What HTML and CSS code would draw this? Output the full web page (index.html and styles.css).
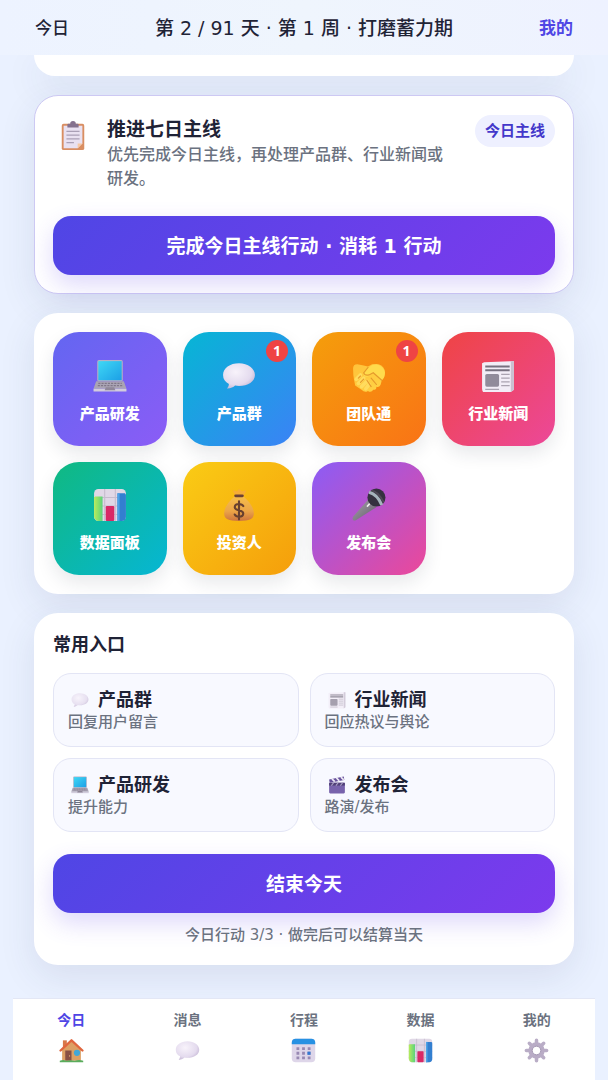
FILE: index.html
```html
<!DOCTYPE html>
<html lang="zh-CN">
<head>
<meta charset="utf-8">
<meta name="viewport" content="width=device-width, initial-scale=1">
<title>今日</title>
<link rel="stylesheet" href="styles.css">
</head>
<body>
<svg class="sprite" aria-hidden="true" width="0" height="0">
  <defs>
    <linearGradient id="screen" x1="0" y1="0" x2="1" y2="1"><stop offset="0" stop-color="#3fd8f5"/><stop offset="1" stop-color="#1c9fe6"/></linearGradient>
    <radialGradient id="bubble" cx=".4" cy=".35" r=".7"><stop offset="0" stop-color="#f8f3fb"/><stop offset=".7" stop-color="#e4dbee"/><stop offset="1" stop-color="#c3b5d3"/></radialGradient>
    <linearGradient id="bag" x1="0" y1="0" x2="0" y2="1"><stop offset="0" stop-color="#f5bd4c"/><stop offset=".6" stop-color="#eca546"/><stop offset="1" stop-color="#cd7440"/></linearGradient>
    <linearGradient id="handle" x1="0" y1="0" x2="1" y2="1"><stop offset="0" stop-color="#aaa4ae"/><stop offset="1" stop-color="#625c69"/></linearGradient>
    <linearGradient id="hand" x1="0" y1="0" x2="1" y2="1"><stop offset="0" stop-color="#ffc23a"/><stop offset="1" stop-color="#ffd445"/></linearGradient>
    <linearGradient id="green" x1="0" y1="0" x2="1" y2="0"><stop offset="0" stop-color="#b8ec5c"/><stop offset="1" stop-color="#5bd37c"/></linearGradient>
  </defs>
  <symbol id="clipboard" viewBox="0 0 32 32">
    <rect x="4" y="3" width="24" height="28" rx="2" fill="#d98e62"/>
    <path d="M6 5h20v19l-5 5H6z" fill="#e9e1f1"/>
    <path d="M26 24l-5 5v-5z" fill="#f7c9a4"/>
    <path d="M10 7v-3q0-1 1-1h2q0-3 3-3t3 3h2q1 0 1 1v3z" fill="#85718e"/>
    <path d="M9 11h14M9 15h14M9 19h14M9 23h8" stroke="#aaa0b6" stroke-width="1.4"/>
  </symbol>
  <symbol id="laptop" viewBox="0 0 32 32">
    <rect x="4" y="1" width="24" height="20" rx="1.5" fill="#b8b0c2"/>
    <rect x="5" y="2" width="22" height="18" fill="url(#screen)"/>
    <path d="M3 21h26l2.500 7H.5z" fill="#aaa4b4"/>
    <path d="M5 23h22M4.500 25h23" stroke="#807789" stroke-width="1.100" stroke-dasharray="2 1"/>
    <path d="M.5 28h31v2.500H.5z" fill="#d2ccdc"/>
    <path d="M12 26.500h8l1 3H11z" fill="#8f8798"/>
  </symbol>
  <symbol id="speech" viewBox="0 0 32 32">
    <path d="M16 4C7.500 4 1 8.500 1 15c0 4 2 6.500 5.500 8.500-.2 2-.7 3-1.800 4.300 3.300.2 6-1.200 7.600-2.800 1 .2 2.300.3 3.700.3 8.500 0 15-4.200 15-10.300S24.500 4 16 4z" fill="url(#bubble)"/>
  </symbol>
  <symbol id="handshake" viewBox="0 0 32 32">
    <path d="M1 9q0-4 4-4l6 1 4 1 4-2h6q6 2 6 8 0 5-3 7l-1 4q-1 3-4 2 0 3-3 3-2 3-5 1-3 2-6-1l-6-4-1-5Q1 15 1 9z" fill="url(#hand)"/>
    <path d="M4 19l4-4M6 23l5-5M9 26l5-5M13 28l3-4" stroke="#ffdc5e" stroke-width="3.400" stroke-linecap="round"/>
    <path d="M11 13l6-6q2-2 6-2 7 2 8 8 0 4-3 7l-8-7-4 3q-4 2-5-1z" fill="#ffdb4c"/>
    <path d="M11 13q1 3 5 2l4-2 8 7M15 8l-4 5M18 18l5 6M14 20l4 6M6 18l2-2M8 22l3-3" fill="none" stroke="#e59a2c" stroke-width="1.100" stroke-linecap="round"/>
  </symbol>
  <symbol id="newspaper" viewBox="0 0 32 32">
    <path d="M3 3l26-1h2v27l-3 2H2q-1-1-1-3V4z" fill="#f2edf7"/>
    <path d="M28 2h3v27l-3 2z" fill="#cac1d1"/>
    <path d="M4 7h23M4 10.500h23" stroke="#777180" stroke-width="1.900"/>
    <rect x="4" y="14" width="13" height="12" rx="1.500" fill="#918b9b"/>
    <path d="M19 14.500h8M19 18h8M19 21.500h8M19 25h8M4 28.500h13" stroke="#aaa3b1" stroke-width="1.200"/>
  </symbol>
  <symbol id="chart" viewBox="0 0 32 32">
    <rect x="1" y="1" width="30" height="30" rx="4" fill="#e0d8e6"/>
    <path d="M1 9h30M1 17h30M1 25h30M11 1v30M21 1v30" stroke="#c5bccd" stroke-width="1"/>
    <path d="M2 8h7v23H5q-3 0-4-4V9z" fill="url(#green)"/>
    <rect x="12" y="17" width="8" height="14" rx="1" fill="#d82966"/>
    <path d="M23 5h7l1 1v21q0 4-4 4h-4z" fill="#337fd0"/>
    <path d="M23 5h2v26h-2z" fill="#4da3e7"/>
  </symbol>
  <symbol id="moneybag" viewBox="0 0 32 32">
    <path d="M10 2l4 1 2-2 3 2 4-1-3 6h-7z" fill="#f7ad35"/>
    <path d="M12 8h8c5 4 10 10 10 16 0 5-4 7-14 7S2 29 2 24C2 18 7 12 12 8z" fill="url(#bag)"/>
    <rect x="11.500" y="6" width="9" height="2.600" rx="1.300" fill="#6a4135"/>
    <path d="M20 17q-1-2-4-2-4 0-4 3c0 4 8 2 8 6 0 2-2 3-4 3-3 0-4-2-4-2M16 12.500v17" fill="none" stroke="#68402f" stroke-width="2" stroke-linecap="round"/>
  </symbol>
  <symbol id="microphone" viewBox="0 0 32 32">
    <path d="M16 10l7 8L4 30q-2 1-3 0t0-3z" fill="url(#handle)"/>
    <path d="M14.500 17l2-2" stroke="#eee" stroke-width="1.500" stroke-linecap="round"/>
    <circle cx="23" cy="9" r="8.500" fill="#35313f"/>
    <path d="M18 2.500q6 0 12 11" fill="none" stroke="#504957" stroke-width="1.500"/>
    <path d="M16 4q8 2 12 12" fill="none" stroke="#a6b4bd" stroke-width="3"/>
  </symbol>
  <symbol id="clapper" viewBox="0 0 32 32">
    <path d="M2 6l26-5 1 6L3 12z" fill="#65509a"/>
    <path d="M7 5l5 5M15 3.500l5 5M23 2l5 5" stroke="#eee9f5" stroke-width="3"/>
    <rect x="2" y="12" width="28" height="19" rx="2" fill="#7863ac"/>
    <path d="M2 12h28v5H2z" fill="#514078"/>
    <path d="M6 17l4-5M14 17l4-5M22 17l4-5" stroke="#aaa0c5" stroke-width="2"/>
  </symbol>
  <symbol id="house" viewBox="0 0 32 32">
    <path d="M5 3h5v10H5z" fill="#d77849"/>
    <path d="M4 15L16 4l12 11v14H4z" fill="#dda064"/>
    <path d="M2 16L16 3l14 13" fill="none" stroke="#e0663e" stroke-width="3" stroke-linecap="round" stroke-linejoin="round"/>
    <rect x="8" y="16" width="8" height="13" fill="#895044"/>
    <circle cx="13.500" cy="23" r=".8" fill="#efb778"/>
    <circle cx="23" cy="19" r="4" fill="#43a7d8"/>
    <path d="M1 29q5-2 8 0 7-1 11 0 6-2 11 0v2H1z" fill="#5aac5c"/>
  </symbol>
  <symbol id="calendar" viewBox="0 0 32 32">
    <rect x="1" y="1" width="30" height="30" rx="5" fill="#ded6e9"/>
    <path d="M1 8V6q0-5 5-5h20q5 0 5 5v2z" fill="#2791e3"/>
    <path d="M7 13.500h18M7 19.500h18M7 25.500h18" stroke="#9889b3" stroke-width="3.600" stroke-dasharray="3.600 3.600"/>
    <rect x="21" y="17.500" width="4" height="4" fill="#3478d2"/>
  </symbol>
  <symbol id="gear" viewBox="0 0 32 32">
    <path d="M16 3v26M3 16h26M6.800 6.800l18.400 18.400M25.200 6.800L6.800 25.200" stroke="#b9adc6" stroke-width="4.500" stroke-linecap="round"/>
    <circle cx="16" cy="16" r="8" fill="#fff" stroke="#b9acc6" stroke-width="5"/>
    <circle cx="16" cy="16" r="5.500" fill="#fff" stroke="#9d8fad" stroke-width="1.200"/>
  </symbol>
</svg>
<div class="shell">
  <header class="topbar">
    <button class="topbar-link" type="button">今日</button>
    <h1 class="topbar-title">第 2 / 91 天 · 第 1 周 · 打磨蓄力期</h1>
    <button class="topbar-link accent" type="button">我的</button>
  </header>
  <main class="feed">
    <div class="card card-tail"></div>
    <section class="card mission">
      <div class="mission-head">
        <svg class="mission-icon" aria-hidden="true"><use href="#clipboard"/></svg>
        <div class="mission-copy">
          <h2 class="mission-title">推进七日主线</h2>
          <p class="mission-text">优先完成今日主线，再处理产品群、行业新闻或研发。</p>
        </div>
        <span class="pill">今日主线</span>
      </div>
      <button class="primary" type="button">完成今日主线行动 · 消耗 1 行动</button>
    </section>
    <section class="card apps">
      <button class="app indigo" type="button"><svg class="app-icon" aria-hidden="true"><use href="#laptop"/></svg><span>产品研发</span></button>
      <button class="app blue" type="button"><svg class="app-icon" aria-hidden="true"><use href="#speech"/></svg><span>产品群</span><span class="badge">1</span></button>
      <button class="app orange" type="button"><svg class="app-icon" aria-hidden="true"><use href="#handshake"/></svg><span>团队通</span><span class="badge">1</span></button>
      <button class="app red" type="button"><svg class="app-icon" aria-hidden="true"><use href="#newspaper"/></svg><span>行业新闻</span></button>
      <button class="app teal" type="button"><svg class="app-icon" aria-hidden="true"><use href="#chart"/></svg><span>数据面板</span></button>
      <button class="app gold" type="button"><svg class="app-icon" aria-hidden="true"><use href="#moneybag"/></svg><span>投资人</span></button>
      <button class="app violet" type="button"><svg class="app-icon" aria-hidden="true"><use href="#microphone"/></svg><span>发布会</span></button>
    </section>
    <section class="card entries">
      <h2 class="entries-title">常用入口</h2>
      <div class="entry-grid">
        <button class="entry" type="button"><span class="entry-name"><svg class="entry-icon faded" aria-hidden="true"><use href="#speech"/></svg>产品群</span><span class="entry-note">回复用户留言</span></button>
        <button class="entry" type="button"><span class="entry-name"><svg class="entry-icon faded" aria-hidden="true"><use href="#newspaper"/></svg>行业新闻</span><span class="entry-note">回应热议与舆论</span></button>
        <button class="entry" type="button"><span class="entry-name"><svg class="entry-icon" aria-hidden="true"><use href="#laptop"/></svg>产品研发</span><span class="entry-note">提升能力</span></button>
        <button class="entry" type="button"><span class="entry-name"><svg class="entry-icon" aria-hidden="true"><use href="#clapper"/></svg>发布会</span><span class="entry-note">路演/发布</span></button>
      </div>
      <button class="primary" type="button">结束今天</button>
      <p class="hint">今日行动 3/3 · 做完后可以结算当天</p>
    </section>
  </main>
  <nav class="tabs" aria-label="主导航">
    <a class="tab active" href="#today">今日<svg class="tab-icon" aria-hidden="true"><use href="#house"/></svg></a>
    <a class="tab" href="#messages">消息<svg class="tab-icon" aria-hidden="true"><use href="#speech"/></svg></a>
    <a class="tab" href="#schedule">行程<svg class="tab-icon" aria-hidden="true"><use href="#calendar"/></svg></a>
    <a class="tab" href="#data">数据<svg class="tab-icon" aria-hidden="true"><use href="#chart"/></svg></a>
    <a class="tab" href="#me">我的<svg class="tab-icon" aria-hidden="true"><use href="#gear"/></svg></a>
  </nav>
</div>
</body>
</html>
```
FILE: styles.css
```css
* {
  box-sizing: border-box;
}

body {
  margin: 0;
  background: #eaf1ff;
  color: #1f2336;
  font-family: "DejaVu Sans", "Noto Sans CJK SC", sans-serif;
}

h1, h2, p {
  margin: 0;
}

button {
  margin: 0;
  padding: 0;
  border: 0;
  background: none;
  color: inherit;
  font: inherit;
  cursor: pointer;
}

.sprite {
  position: absolute;
}

.shell {
  display: flex;
  flex-direction: column;
  min-height: 100vh;
  margin: 0 13px;
}

.topbar {
  position: relative;
  z-index: 1;
  display: flex;
  align-items: center;
  justify-content: space-between;
  height: 55px;
  margin: 0 -13px;
  padding: 0 35px;
  background: linear-gradient(90deg, #edf3ff, #eff5fd 50%, #eef2ff);
}

.topbar-link {
  font-size: 17px;
  font-weight: 500;
  line-height: 24px;
}

.topbar-link.accent {
  color: #4f46e5;
  font-weight: 700;
}

.topbar-title {
  font-size: 19px;
  font-weight: 500;
  line-height: 26px;
}

.feed {
  display: flex;
  flex: 1;
  flex-direction: column;
  gap: 19px;
  padding: 0 21px 32px;
}

.card {
  padding: 19px;
  border-radius: 24px;
  background: #fff;
  box-shadow: 0 12px 36px rgba(49, 60, 100, 0.1);
}

.card-tail {
  height: 21px;
  padding: 0;
  border-radius: 0 0 24px 24px;
}

.mission {
  padding: 19px 18px 18px;
  border: 1px solid #cdc9f3;
}

.mission-head {
  display: flex;
  align-items: flex-start;
}

.mission-icon {
  flex: none;
  width: 30px;
  height: 30px;
  margin: 6px 19px 0 5px;
}

.mission-copy {
  flex: 1;
  padding-right: 20px;
}

.mission-title {
  font-size: 19px;
  font-weight: 700;
  line-height: 28px;
}

.mission-text {
  color: #6b7280;
  font-size: 16px;
  font-weight: 500;
  line-height: 24px;
}

.pill {
  padding: 4px 10px;
  border-radius: 16px;
  background: #eef0ff;
  color: #4338ca;
  font-size: 15px;
  font-weight: 700;
  line-height: 24px;
}

.primary {
  width: 100%;
  height: 59px;
  border-radius: 18px;
  background: linear-gradient(135deg, #4f46e5, #7c3aed);
  box-shadow: 0 10px 24px rgba(91, 61, 233, 0.2);
  color: #fff;
  font-size: 19px;
  font-weight: 700;
  line-height: 28px;
}

.mission .primary {
  margin-top: 25px;
}

.apps {
  display: grid;
  grid-template-columns: repeat(4, 1fr);
  gap: 16px;
}

.app {
  position: relative;
  display: flex;
  flex-direction: column;
  align-items: center;
  justify-content: center;
  gap: 10px;
  padding-top: 6px;
  aspect-ratio: 1;
  border-radius: 26px;
  box-shadow: 0 8px 18px rgba(31, 35, 54, 0.1);
  color: #fff;
  font-size: 15px;
  font-weight: 900;
  line-height: 22px;
}

.app-icon {
  width: 34px;
  height: 34px;
}

.indigo { background: linear-gradient(135deg, #6366f1, #8b5cf6); }
.blue { background: linear-gradient(135deg, #06b6d4, #3b82f6); }
.orange { background: linear-gradient(135deg, #f59e0b, #f97316); }
.red { background: linear-gradient(135deg, #ef4444, #ec4899); }
.teal { background: linear-gradient(135deg, #10b981, #06b6d4); }
.gold { background: linear-gradient(135deg, #facc15, #f59e0b); }
.violet { background: linear-gradient(135deg, #8b5cf6, #ec4899); }

.badge {
  position: absolute;
  top: 8px;
  right: 8px;
  width: 22px;
  height: 22px;
  border-radius: 50%;
  background: #ef4444;
  font-family: "Noto Sans", sans-serif;
  font-size: 14px;
  font-weight: 700;
}

.entries-title {
  font-size: 18px;
  font-weight: 700;
  line-height: 26px;
}

.entry-grid {
  display: grid;
  grid-template-columns: 1fr 1fr;
  gap: 11px;
  margin: 15px 0 22px;
}

.entry {
  display: flex;
  flex-direction: column;
  align-items: flex-start;
  padding: 14px;
  border: 1px solid #e3e5f5;
  border-radius: 18px;
  background: #f8f9ff;
}

.entry-name {
  display: flex;
  align-items: center;
  font-size: 18px;
  font-weight: 700;
  line-height: 24px;
}

.entry-icon {
  width: 18px;
  height: 18px;
  margin: 0 9px 0 3px;
}

.faded {
  opacity: 0.8;
}

.entry-note {
  color: #6b7280;
  font-size: 15px;
  font-weight: 500;
  line-height: 20px;
}

.hint {
  margin-top: 11px;
  color: #6b7280;
  font-size: 15px;
  font-weight: 500;
  line-height: 22px;
  text-align: center;
}

.tabs {
  display: grid;
  grid-template-columns: repeat(5, 1fr);
  height: 82px;
  border-top: 1px solid #e3e7f5;
  background: #fff;
}

.tab {
  display: flex;
  flex-direction: column;
  align-items: center;
  gap: 8px;
  padding-top: 11px;
  color: #6b7280;
  font-size: 14px;
  font-weight: 700;
  line-height: 20px;
  text-decoration: none;
}

.tab.active {
  color: #4f46e5;
}

.tab-icon {
  width: 25px;
  height: 25px;
}
```
